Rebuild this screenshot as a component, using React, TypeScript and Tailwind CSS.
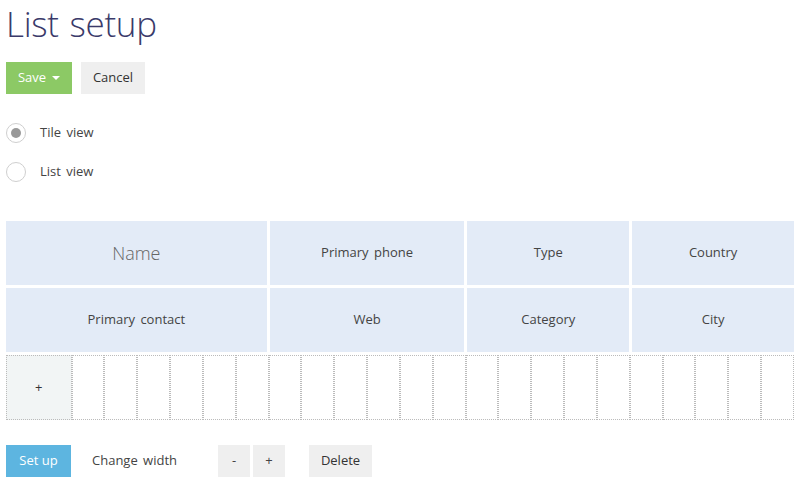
import React from "react";

const font = { fontFamily: '"Open Sans", "Noto Sans", sans-serif', wordSpacing: "2px" };

export default function App() {
  const row1 = [
    { label: "Name", span: "col-span-8", big: true },
    { label: "Primary phone", span: "col-span-6" },
    { label: "Type", span: "col-span-5" },
    { label: "Country", span: "col-span-5" },
  ];
  const row2 = [
    { label: "Primary contact", span: "col-span-8" },
    { label: "Web", span: "col-span-6" },
    { label: "Category", span: "col-span-5" },
    { label: "City", span: "col-span-5" },
  ];
  const empty = Array.from({ length: 22 });
  return (
    <div className="w-[800px] h-[484px] bg-white overflow-hidden text-[#333]" style={font}>
      <div className="px-[6px]">
        <h1 className="text-[35px] font-light text-[#3a3a6a] leading-[48px] tracking-[-0.3px]">List setup</h1>
        <div className="flex gap-[9px] mt-[14px]">
          <button className="h-[32px] w-[66px] bg-[#8cc965] text-white text-[13px] flex items-center justify-center gap-[6px]">
            Save
            <span className="w-0 h-0 border-l-[4px] border-r-[4px] border-t-[4px] border-l-transparent border-r-transparent border-t-white"></span>
          </button>
          <button className="h-[32px] w-[64px] bg-[#efefef] text-[#333] text-[13px]">Cancel</button>
        </div>
        <div className="mt-[29px] flex flex-col gap-[19px]">
          <label className="flex items-center gap-[14px] h-[20px]">
            <span className="w-[20px] h-[20px] rounded-full border border-[#cfcfcf] flex items-center justify-center">
              <span className="w-[10px] h-[10px] rounded-full bg-[#999]"></span>
            </span>
            <span className="text-[13px] text-[#444]">Tile view</span>
          </label>
          <label className="flex items-center gap-[14px] h-[20px]">
            <span className="w-[20px] h-[20px] rounded-full border border-[#cfcfcf]"></span>
            <span className="text-[13px] text-[#444]">List view</span>
          </label>
        </div>
        <div className="mt-[39px] grid gap-[3px] w-[788px]" style={{ gridTemplateColumns: "repeat(24, minmax(0, 1fr))" }}>
          {row1.map((c) => (
            <div key={c.label} className={`${c.span} h-[64px] bg-[#e3ebf7] flex items-center justify-center ${c.big ? "text-[18px] text-[#666] font-light" : "text-[13px] text-[#444]"}`}>
              {c.label}
            </div>
          ))}
          {row2.map((c) => (
            <div key={c.label} className={`${c.span} h-[64px] bg-[#e3ebf7] flex items-center justify-center text-[13px] text-[#444]`}>
              {c.label}
            </div>
          ))}
        </div>
        <div className="grid w-[788px] mt-[3px]" style={{ gridTemplateColumns: "repeat(24, minmax(0, 1fr))" }}>
          <div className="col-span-2 h-[65px] bg-[#f2f5f5] border border-dotted border-[#bbb] flex items-center justify-center text-[13px] text-[#333]">+</div>
          {empty.map((_, i) => (
            <div key={i} className="h-[65px] border border-dotted border-[#bbb]"></div>
          ))}
        </div>
        <div className="flex items-center mt-[25px]">
          <button className="h-[32px] w-[65px] bg-[#5db5e0] text-white text-[13px]">Set up</button>
          <span className="ml-[21px] w-[88px] text-[13px] text-[#444] whitespace-nowrap">Change width</span>
          <button className="ml-[38px] h-[32px] w-[32px] bg-[#efefef] text-[13px] text-[#444]">-</button>
          <button className="ml-[3px] h-[32px] w-[32px] bg-[#efefef] text-[13px] text-[#444]">+</button>
          <button className="ml-[24px] h-[32px] w-[63px] bg-[#efefef] text-[13px] text-[#333]">Delete</button>
        </div>
      </div>
    </div>
  );
}
